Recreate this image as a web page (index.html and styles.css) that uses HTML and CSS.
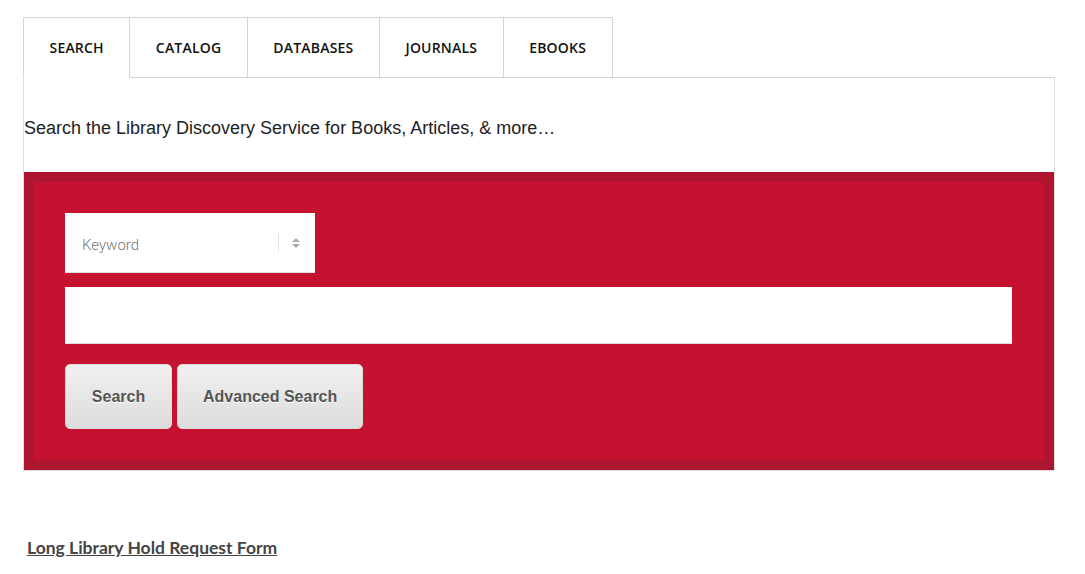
FILE: index.html
```html
<!DOCTYPE html>
<html lang="en">
<head>
    <meta charset="UTF-8">
    <meta name="viewport" content="width=device-width, initial-scale=1.0">
    <title>Library Search</title>
    <link rel="stylesheet" href="styles.css">
</head>
<body>
    <div class="search-widget">
        <ul class="tabs">
            <li class="tab active"><a href="#">Search</a></li>
            <li class="tab"><a href="#">Catalog</a></li>
            <li class="tab"><a href="#">Databases</a></li>
            <li class="tab"><a href="#">Journals</a></li>
            <li class="tab"><a href="#">eBooks</a></li>
        </ul>

        <div class="panel">
            <p class="panel-intro">Search the Library Discovery Service for Books, Articles, &amp; more&hellip;</p>

            <form class="search-box">
                <div class="select-wrap">
                    <span class="select-label">Keyword</span>
                    <span class="select-divider"></span>
                    <span class="select-arrows">
                        <span class="arrow-up"></span>
                        <span class="arrow-down"></span>
                    </span>
                </div>
                <input type="text" class="search-input" aria-label="search terms">
                <div class="search-buttons">
                    <button type="submit" class="btn">Search</button>
                    <button type="button" class="btn">Advanced Search</button>
                </div>
            </form>
        </div>
    </div>

    <p class="hold-link"><a href="#">Long Library Hold Request Form</a></p>
</body>
</html>
```

FILE: styles.css
```css
/* Base */
body {
    margin: 0;
    background-color: #fff;
    font-family: "Liberation Sans", Arial, sans-serif;
    color: #222;
}

.search-widget {
    margin: 17px 0 0 23px;
    width: 1032px;
}

/* Tabs */
.tabs {
    display: flex;
    list-style: none;
    margin: 0;
    padding: 0;
    border-bottom: 1px solid #d4d4d4;
}

.tab {
    border-top: 1px solid #d4d4d4;
    border-right: 1px solid #d4d4d4;
    border-bottom: 1px solid #d4d4d4;
    margin-bottom: -1px;
}

.tab:first-child {
    border-left: 1px solid #d4d4d4;
}

.tab.active {
    border-bottom-color: #fff;
}

.tab a {
    display: block;
    height: 59px;
    line-height: 60px;
    padding: 0 25.5px;
    font-family: "Open Sans", sans-serif;
    font-weight: 600;
    font-size: 14px;
    letter-spacing: 0.2px;
    text-transform: uppercase;
    text-decoration: none;
    color: #111;
}

/* Panel */
.panel {
    border: 1px solid #ddd;
    border-top: none;
}

.panel-intro {
    margin: 0;
    padding: 40px 0 34px 0;
    font-size: 18px;
    line-height: 20px;
    color: #222;
}

/* Red search box */
.search-box {
    background-color: #c41230;
    border: 10px solid #ad1530;
    padding: 31px 32px 31px 31px;
}

.select-wrap {
    display: flex;
    align-items: center;
    width: 250px;
    height: 60px;
    background-color: #fff;
    border-bottom: 1px solid #ddd;
    box-sizing: border-box;
    padding: 4px 0 0 17px;
}

.select-label {
    flex: 1;
    font-family: Roboto, sans-serif;
    font-weight: 300;
    font-size: 15px;
    color: #777;
}

.select-divider {
    width: 1px;
    height: 18px;
    margin-top: -4px;
    background-color: #e2e2e2;
}

.select-arrows {
    display: flex;
    flex-direction: column;
    gap: 2px;
    margin-top: -4px;
    padding: 0 15px 0 13px;
}

.arrow-up,
.arrow-down {
    width: 0;
    height: 0;
    border-left: 4px solid transparent;
    border-right: 4px solid transparent;
}

.arrow-up {
    border-bottom: 4px solid #aaa;
}

.arrow-down {
    border-top: 4px solid #aaa;
}

.search-input {
    display: block;
    width: 100%;
    height: 57px;
    margin: 14px 0 20px 0;
    border: none;
    border-bottom: 1px solid #ddd;
    box-sizing: border-box;
    background-color: #fff;
}

.search-buttons {
    display: flex;
    gap: 5px;
}

.btn {
    min-width: 107px;
    height: 65px;
    padding: 0 25px;
    border: 1px solid #ddd;
    border-radius: 5px;
    background: linear-gradient(#f0f0f0, #dcdcdc);
    font-family: "Liberation Sans", Arial, sans-serif;
    font-weight: bold;
    font-size: 16px;
    color: #555;
    text-shadow: 0 1px 0 #fff;
    cursor: pointer;
}

/* Hold request link */
.hold-link {
    margin: 66px 0 0 27px;
    font-family: Lato, sans-serif;
    font-weight: bold;
    font-size: 17.5px;
}

.hold-link a {
    color: #444;
}
```
